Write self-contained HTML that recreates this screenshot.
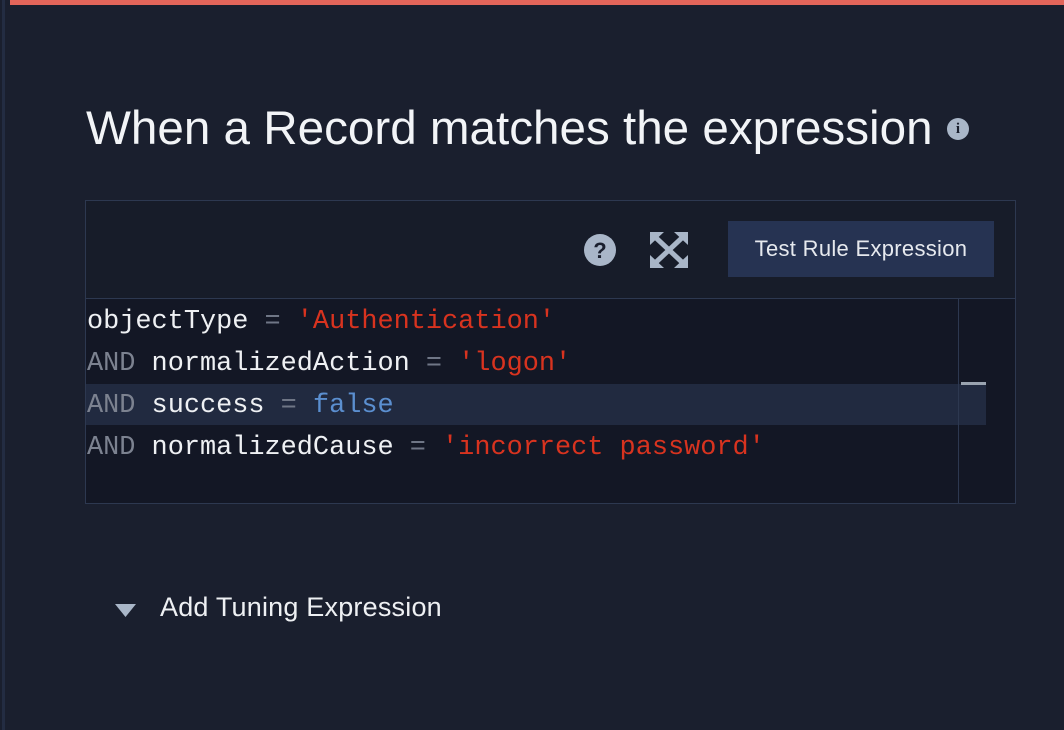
<!DOCTYPE html>
<html><head><meta charset="utf-8"><style>
html,body{margin:0;padding:0;}
body{width:1064px;height:730px;background:#1a1f2e;position:relative;overflow:hidden;font-family:"Liberation Sans",sans-serif;}
.lb{position:absolute;left:2px;top:0;width:3px;height:730px;background:#232c42;}
.red{position:absolute;left:10px;top:0;width:1054px;height:5px;background:#e3655a;}
.title{position:absolute;left:86px;top:101px;font-size:47.6px;color:#f2f4f7;white-space:nowrap;}
.info{position:absolute;left:947px;top:118px;width:22px;height:22px;border-radius:50%;background:#a9b6c8;color:#1a1f2e;font:bold 15px "Liberation Serif",serif;text-align:center;line-height:23px;}
.box{position:absolute;left:85px;top:200px;width:929px;height:302px;border:1px solid #2d3850;background:#171c29;}
.code{position:absolute;left:0;top:97px;width:929px;height:204px;background:#131725;border-top:1px solid #2d3850;}
.sb{position:absolute;left:872px;top:0;width:1px;height:204px;background:#2d3850;}
.thumb{position:absolute;left:875px;top:83px;width:25px;height:3px;background:#9aa3b0;}
.hl{position:absolute;left:0;top:85px;width:900px;height:41px;background:#212a40;}
.ln{position:absolute;left:1px;font-family:"Liberation Mono",monospace;font-size:26.9px;white-space:pre;color:#eef0f3;}
.k{color:#7c8290}.o{color:#6f7686}.s{color:#d8331f}.b{color:#5b8fd0}
.btn{position:absolute;left:642px;top:20px;width:266px;height:56px;background:#263352;color:#e6e9ee;font-size:22px;letter-spacing:0.3px;text-align:center;line-height:56px;}
.add{position:absolute;left:160px;top:592px;font-size:27px;color:#eef0f3;letter-spacing:0.2px;}
</style></head><body>
<div class="lb"></div><div class="red"></div>
<div class="title">When a Record matches the expression</div>
<div class="info">i</div>
<div class="box">
 <svg style="position:absolute;left:498px;top:33px" width="32" height="32" viewBox="0 0 32 32"><circle cx="16" cy="16" r="16" fill="#a9b6c8"/><text x="16" y="24" text-anchor="middle" font-family="Liberation Sans" font-weight="bold" font-size="22" fill="#1a1f2e">?</text></svg>
 <svg style="position:absolute;left:564px;top:31px" width="38" height="36" viewBox="0 0 38 36" fill="#a9b6c8" stroke="#a9b6c8" stroke-width="5"><path d="M3 3L35 33M35 3L3 33" fill="none"/><path d="M0 0h14L0 13z" stroke="none"/><path d="M38 0H24L38 13z" stroke="none"/><path d="M0 36h14L0 23z" stroke="none"/><path d="M38 36H24L38 23z" stroke="none"/></svg>
 <div class="btn">Test Rule Expression</div>
 <div class="code">
  <div class="hl"></div>
  <div class="sb"></div><div class="thumb"></div>
  <div class="ln" style="top:8px">objectType <span class="o">=</span> <span class="s">'Authentication'</span></div>
  <div class="ln" style="top:50px"><span class="k">AND</span> normalizedAction <span class="o">=</span> <span class="s">'logon'</span></div>
  <div class="ln" style="top:92px"><span class="k">AND</span> success <span class="o">=</span> <span class="b">false</span></div>
  <div class="ln" style="top:134px"><span class="k">AND</span> normalizedCause <span class="o">=</span> <span class="s">'incorrect password'</span></div>
 </div>
</div>
<svg style="position:absolute;left:115px;top:604px" width="21" height="13" viewBox="0 0 21 13"><path d="M0 0h21L10.5 13z" fill="#a9b6c8"/></svg>
<div class="add">Add Tuning Expression</div>
</body></html>
